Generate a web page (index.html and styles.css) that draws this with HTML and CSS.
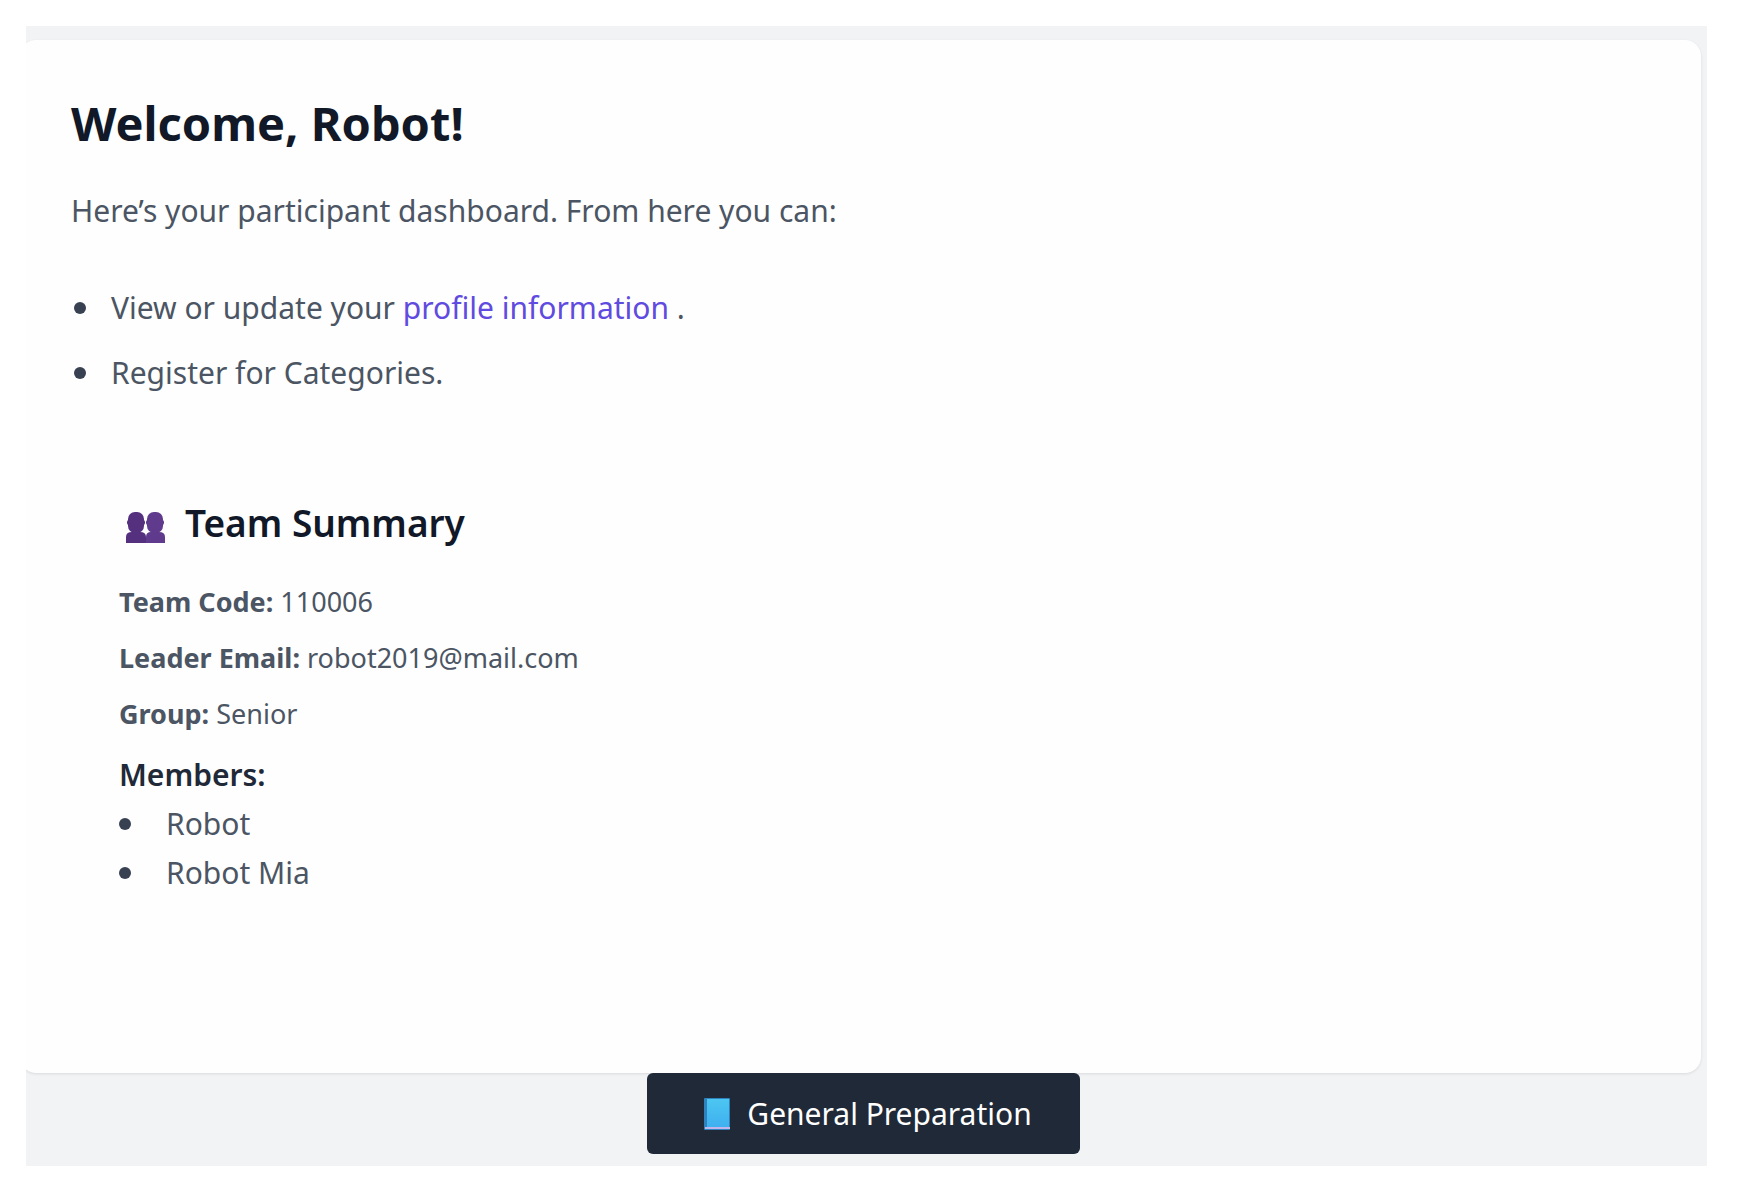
FILE: index.html
```html
<!DOCTYPE html>
<html lang="en">
<head>
    <meta charset="UTF-8">
    <meta name="viewport" content="width=device-width, initial-scale=1.0">
    <title>Participant Dashboard</title>
    <link rel="stylesheet" href="styles.css">
</head>
<body>
    <main class="page">
        <section class="card">
            <h1>Welcome, Robot!</h1>
            <p class="intro">Here’s your participant dashboard. From here you can:</p>

            <ul class="actions">
                <li>View or update your <a href="#profile">profile information</a> .</li>
                <li>Register for Categories.</li>
            </ul>

            <div class="team">
                <h2>
                    <svg class="team-icon" viewBox="0 0 39 32" aria-hidden="true">
                        <g fill="#54307f">
                            <rect x="2" y="1" width="16" height="21" rx="7"/>
                            <rect x="1" y="9" width="18" height="5" rx="2"/>
                            <path d="M6 17h8v4q6 0 6 5v6H0v-6q0-5 6-5z"/>
                        </g>
                        <g fill="#603a8c">
                            <rect x="21" y="1" width="16" height="21" rx="7"/>
                            <rect x="20" y="9" width="18" height="5" rx="2"/>
                            <path d="M25 17h8v4q6 0 6 5v6H20v-6q0-5 5-5z"/>
                        </g>
                    </svg>
                    Team Summary
                </h2>
                <p><strong>Team Code:</strong> 110006</p>
                <p><strong>Leader Email:</strong> robot2019@mail.com</p>
                <p><strong>Group:</strong> Senior</p>
                <h3>Members:</h3>
                <ul class="members">
                    <li>Robot</li>
                    <li>Robot Mia</li>
                </ul>
            </div>
        </section>

        <a class="button" href="#preparation">
            <svg class="book-icon" viewBox="0 0 28 34" aria-hidden="true">
                <defs>
                    <linearGradient id="cover" x1="0" y1="0" x2="0" y2="1">
                        <stop offset="0" stop-color="#4cc6f1"/>
                        <stop offset="1" stop-color="#3fb0f0"/>
                    </linearGradient>
                </defs>
                <rect x="1" y="1" width="26" height="32" rx="1" fill="#2e82bd"/>
                <rect x="2" y="30" width="25" height="2" fill="#c3b5ea"/>
                <rect x="4" y="2" width="22" height="28" fill="url(#cover)"/>
            </svg>
            General Preparation
        </a>
    </main>
</body>
</html>
```

FILE: styles.css
```css
* {
    box-sizing: border-box;
}

body {
    font-family: 'Segoe UI', 'Noto Sans', sans-serif;
    font-size: 30px;
    line-height: 49px;
    margin: 26px 56px 24px 26px;
    background: #ffffff;
    color: #4b5563;
}

h1, h2, h3, p, ul {
    margin: 0;
    padding: 0;
}

.page {
    display: flex;
    flex-direction: column;
    align-items: center;
    padding: 14px 6px 12px 0;
    background: #f2f3f5;
    overflow: hidden;
}

/* the left edge of the card runs off the page */
.card {
    align-self: stretch;
    margin-left: -6px;
    padding: 53px 51px 128px;
    background: #fefefe;
    border-radius: 16px;
    box-shadow: 0 1px 3px rgba(0, 0, 0, 0.1);
}

h1 {
    font-size: 47px;
    line-height: 60px;
    color: #111827;
}

.intro {
    margin-top: 33px;
}

ul {
    list-style: none;
}

li::before {
    content: '';
    display: inline-block;
    width: 12px;
    height: 12px;
    vertical-align: 5px;
    border-radius: 50%;
    background: #374151;
}

.actions {
    display: flex;
    flex-direction: column;
    gap: 16px;
    margin-top: 48px;
    padding-left: 3px;
}

.actions li::before {
    margin-right: 25px;
}

a {
    color: #5f4be0;
    text-decoration: none;
}

.team {
    padding: 101px 48px 48px;
}

.team h2 {
    display: flex;
    align-items: center;
    gap: 20px;
    margin-bottom: 35px;
    padding-left: 7px;
    font-size: 37px;
    font-weight: 600;
    color: #111827;
}

.team-icon {
    width: 39px;
    height: 32px;
    margin-top: 8px;
}

.team p {
    margin-bottom: 16px;
    font-size: 27px;
    line-height: 40px;
}

.team h3 {
    font-size: 30px;
    font-weight: 600;
    color: #1f2937;
}

.members li::before {
    margin-right: 35px;
}

.button {
    display: flex;
    align-items: center;
    gap: 16px;
    padding: 16px 48px 16px 56px;
    background: #1f2937;
    color: #ffffff;
    border-radius: 6px;
}

.book-icon {
    width: 28px;
    height: 34px;
}
```
